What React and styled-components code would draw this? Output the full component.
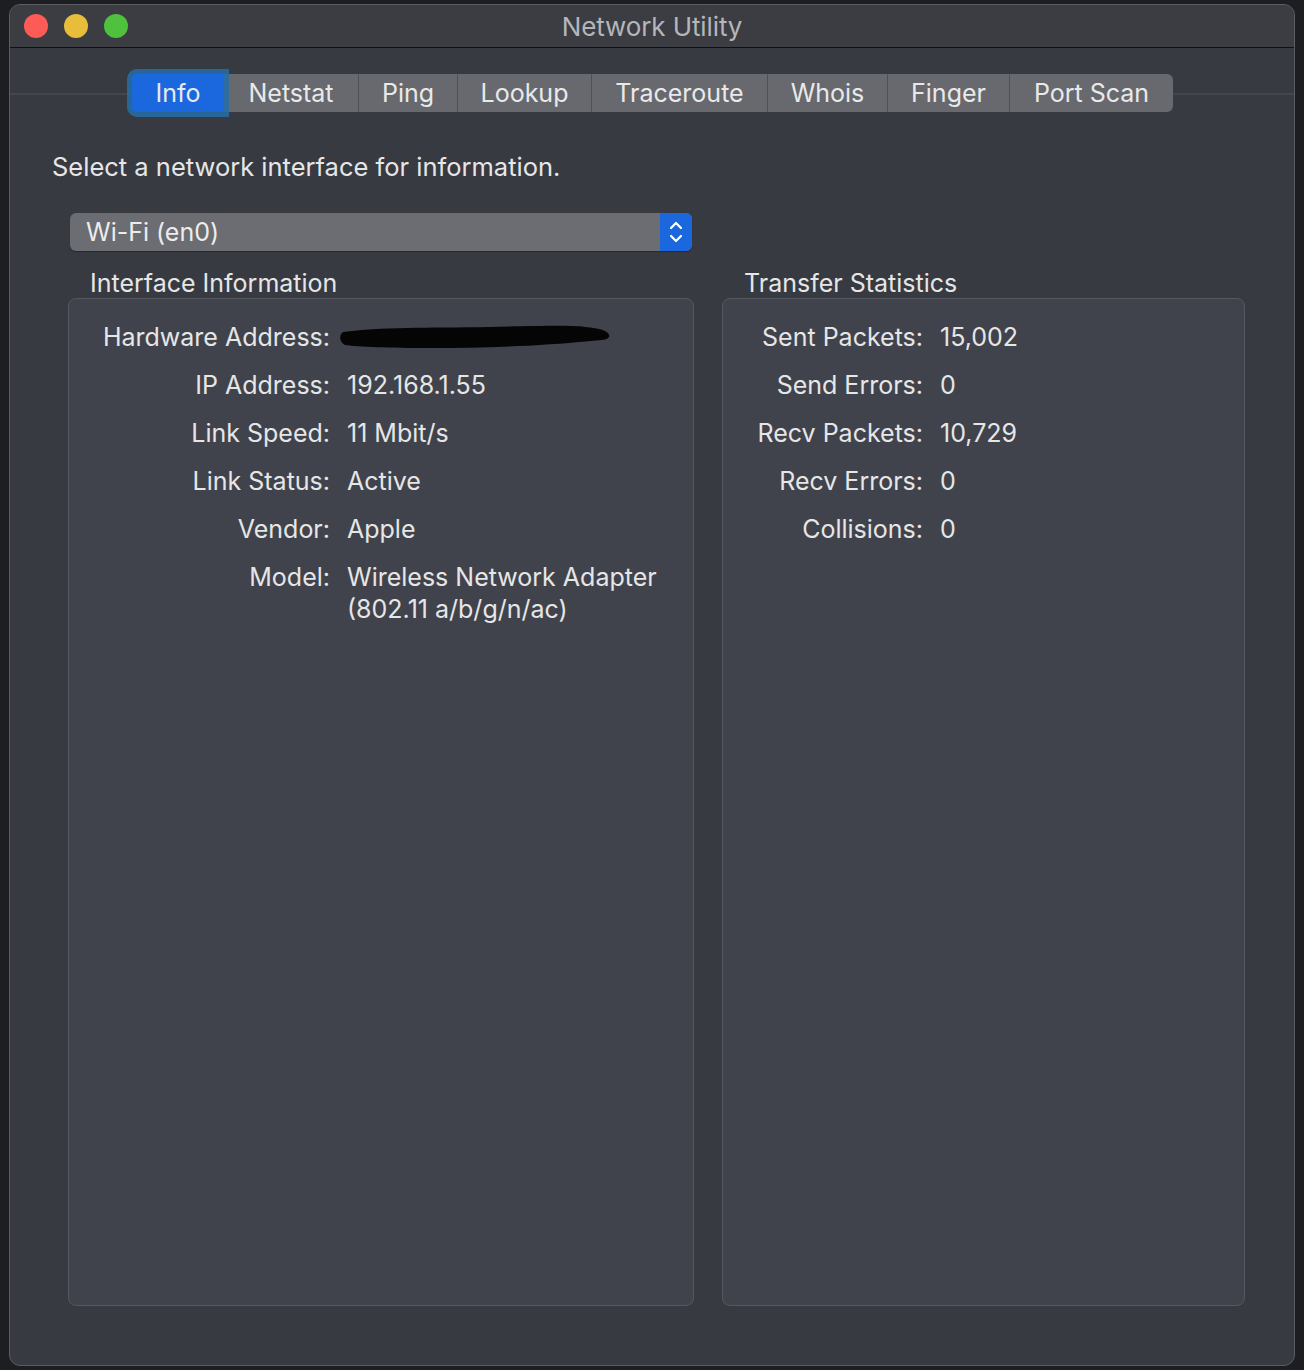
import React from "react";
import styled, { createGlobalStyle } from "styled-components";

const GlobalStyle = createGlobalStyle`
  html, body {
    margin: 0;
    padding: 0;
    background: #1d1e21;
  }
  body {
    font-family: Inter, "Noto Sans", "Liberation Sans", sans-serif;
    -webkit-font-smoothing: antialiased;
  }
`;

const Page = styled.div`
  padding: 4px 9px 4px 9px;
  width: 1304px;
  height: 1370px;
  box-sizing: border-box;
`;

const Window = styled.div`
  height: 1362px;
  box-sizing: border-box;
  border: 1px solid #5b5d62;
  border-radius: 11px;
  background: #373a41;
  display: flex;
  flex-direction: column;
  overflow: hidden;
`;

const TitleBar = styled.div`
  height: 42px;
  flex: none;
  background: #3b3d43;
  border-bottom: 1px solid #101012;
  display: grid;
  grid-template-columns: 200px 1fr 200px;
  align-items: center;
`;

const Lights = styled.div`
  display: flex;
  gap: 16px;
  padding-left: 14px;
`;

const Light = styled.span`
  width: 24px;
  height: 24px;
  border-radius: 50%;
  background: ${(p) => p.color};
`;

const Title = styled.div`
  text-align: center;
  color: #b5b6b9;
  font-size: 26px;
  letter-spacing: -0.1px;
`;

const Body = styled.div`
  flex: 1;
  display: flex;
  flex-direction: column;
  padding-top: 26px;
`;

const TabRow = styled.div`
  position: relative;
  height: 38px;
  padding-left: 122px;
  display: flex;

  &::before {
    content: "";
    position: absolute;
    left: 0;
    right: 0;
    top: 19px;
    height: 2px;
    background: #43464c;
  }
`;

const Tabs = styled.div`
  position: relative;
  display: flex;
  background: #67696e;
  border-radius: 6px;
  height: 38px;
`;

const Tab = styled.div`
  position: relative;
  width: ${(p) => p.w}px;
  box-sizing: border-box;
  display: flex;
  align-items: center;
  justify-content: center;
  font-size: 25px;
  color: #e9e9ea;
  border-left: ${(p) => (p.first || p.afterActive ? "none" : "1px solid #4f5156")};
  background: ${(p) => (p.active ? "#1b68de" : "transparent")};
  border-radius: ${(p) => (p.active ? "5px 0 0 5px" : "0")};
  box-shadow: ${(p) => (p.active ? "0 0 0 5px rgba(38, 110, 170, 0.85)" : "none")};
  z-index: ${(p) => (p.active ? 1 : 0)};
`;

const Content = styled.div`
  flex: 1;
  display: flex;
  flex-direction: column;
  padding: 0 49px 59px 42px;
`;

const Prompt = styled.div`
  margin-top: 40px;
  font-size: 25.5px;
  color: #e6e6e7;
  height: 30px;
  line-height: 30px;
`;

const Popup = styled.div`
  margin: 31px 0 0 18px;
  width: 622px;
  height: 38px;
  box-sizing: border-box;
  border-radius: 6px;
  background: #6b6d72;
  display: flex;
  align-items: center;
  overflow: hidden;
  box-shadow: 0 1px 1px rgba(0, 0, 0, 0.3);
`;

const PopupText = styled.div`
  flex: 1;
  padding-left: 16px;
  font-size: 25px;
  color: #ececed;
`;

const PopupArrows = styled.div`
  width: 32px;
  height: 100%;
  background: #1b68de;
  display: flex;
  align-items: center;
  justify-content: center;
`;

const Columns = styled.div`
  flex: 1;
  display: grid;
  grid-template-columns: 626px 523px;
  column-gap: 28px;
  margin: 17px 0 0 16px;
`;

const Group = styled.div`
  display: flex;
  flex-direction: column;
`;

const GroupTitle = styled.div`
  font-size: 25px;
  color: #e6e6e7;
  height: 30px;
  line-height: 30px;
  padding-left: ${(p) => p.indent}px;
`;

const Box = styled.div`
  flex: 1;
  margin-top: 0;
  border: 1px solid #55585e;
  border-radius: 8px;
  background: #40434b;
  padding-top: 22px;
  display: grid;
  grid-template-columns: ${(p) => p.labelWidth}px 1fr;
  grid-auto-rows: min-content;
  column-gap: 17px;
  row-gap: 16px;
  align-content: start;
`;

const Label = styled.div`
  text-align: right;
  font-size: 25px;
  line-height: 32px;
  color: #e6e6e7;
`;

const Value = styled.div`
  font-size: 25px;
  line-height: 32px;
  color: #e6e6e7;
  white-space: pre-line;
`;

const Redacted = () => (
  <svg width="276" height="28" viewBox="0 0 276 28" style={{ display: "block", marginTop: 3, marginLeft: -8 }}>
    <path
      d="M4 8 C40 3 90 4 150 3 C200 2 230 1 246 3 C262 4 272 8 270 13 C268 17 258 16 240 18 C200 22 140 24 90 24 C50 24 20 23 6 21 C0 18 0 11 4 8 Z"
      fill="#050505"
    />
  </svg>
);

const tabs = [
  ["Info", 92],
  ["Netstat", 134],
  ["Ping", 99],
  ["Lookup", 134],
  ["Traceroute", 176],
  ["Whois", 120],
  ["Finger", 122],
  ["Port Scan", 164],
];

const info = [
  ["IP Address:", "192.168.1.55"],
  ["Link Speed:", "11 Mbit/s"],
  ["Link Status:", "Active"],
  ["Vendor:", "Apple"],
  ["Model:", "Wireless Network Adapter\n(802.11 a/b/g/n/ac)"],
];

const stats = [
  ["Sent Packets:", "15,002"],
  ["Send Errors:", "0"],
  ["Recv Packets:", "10,729"],
  ["Recv Errors:", "0"],
  ["Collisions:", "0"],
];

export default function App() {
  return (
    <>
      <GlobalStyle />
      <Page>
        <Window>
          <TitleBar>
            <Lights>
              <Light color="#fd5b56" />
              <Light color="#e8bd3c" />
              <Light color="#4fc13c" />
            </Lights>
            <Title>Network Utility</Title>
            <div />
          </TitleBar>
          <Body>
            <TabRow>
              <Tabs>
                {tabs.map(([name, w], i) => (
                  <Tab key={name} w={w} first={i === 0} afterActive={i === 1} active={i === 0}>
                    {name}
                  </Tab>
                ))}
              </Tabs>
            </TabRow>
            <Content>
              <Prompt>Select a network interface for information.</Prompt>
              <Popup>
                <PopupText>Wi-Fi (en0)</PopupText>
                <PopupArrows>
                  <svg width="16" height="26" viewBox="0 0 16 26">
                    <path d="M3 9 L8 4 L13 9 M3 17 L8 22 L13 17" stroke="#fff" strokeWidth="2.2" fill="none" strokeLinecap="round" strokeLinejoin="round" />
                  </svg>
                </PopupArrows>
              </Popup>
              <Columns>
                <Group>
                  <GroupTitle indent={22}>Interface Information</GroupTitle>
                  <Box labelWidth={261}>
                    <Label>Hardware Address:</Label>
                    <Value>
                      <Redacted />
                    </Value>
                    {info.map(([l, v]) => (
                      <React.Fragment key={l}>
                        <Label>{l}</Label>
                        <Value>{v}</Value>
                      </React.Fragment>
                    ))}
                  </Box>
                </Group>
                <Group>
                  <GroupTitle indent={22}>Transfer Statistics</GroupTitle>
                  <Box labelWidth={200}>
                    {stats.map(([l, v]) => (
                      <React.Fragment key={l}>
                        <Label>{l}</Label>
                        <Value>{v}</Value>
                      </React.Fragment>
                    ))}
                  </Box>
                </Group>
              </Columns>
            </Content>
          </Body>
        </Window>
      </Page>
    </>
  );
}
